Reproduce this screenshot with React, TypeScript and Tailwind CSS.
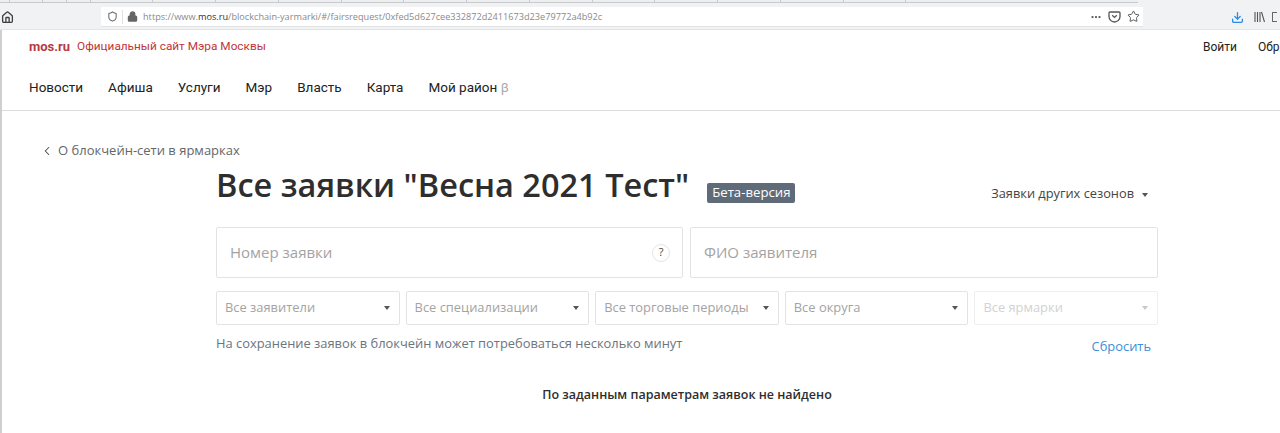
import React from 'react';
import { ChevronLeft, Download, Ellipsis, Home, Lock, Shield, Star } from 'lucide-react';

const navItems = ['Новости', 'Афиша', 'Услуги', 'Мэр', 'Власть', 'Карта'];

const filters = [
    { label: 'Все заявители' },
    { label: 'Все специализации' },
    { label: 'Все торговые периоды' },
    { label: 'Все округа' },
    { label: 'Все ярмарки', disabled: true },
];

function Caret({ light }: { light?: boolean }) {
    return <span className={`block w-0 h-0 border-x-[3.5px] border-x-transparent border-t-[4px] ${light ? 'border-t-[#c8c8c8]' : 'border-t-[#555]'}`}></span>;
}

function BrowserBar() {
    return (
        <div className="h-[30px] shrink-0 bg-[#f1f2f4] border-b border-[#e3e4e6] font-['Open_Sans',sans-serif]">
            <div className="h-[3px] w-[1138px] flex border-b border-[#c9cacc] bg-[#eceef0]">
                {[10, 33, 24, 24, 62, 63, 63, 63, 62, 63, 63, 63, 62, 63, 63, 63, 62].map((w, i) => (
                    <span key={i} className="border-r border-[#c9cacc]" style={{ width: w }}></span>
                ))}
            </div>
            <div className="flex items-center h-[26px] pt-[2px]">
                <Home size={13} strokeWidth={2.4} className="ml-[1px] text-[#3f3f3f]" />
                <div className="ml-[87px] w-[1042px] h-[20px] bg-white border-b border-[#e3e4e6] flex items-center">
                    <Shield size={11} strokeWidth={2.2} className="ml-[6px] text-[#666]" />
                    <span className="ml-[4px] h-[14px] border-l border-[#e0e0e0]"></span>
                    <Lock size={11} strokeWidth={2.6} fill="currentColor" className="ml-[4px] text-[#666]" />
                    <span className="ml-[5px] text-[9.17px] text-[#8a8a8a] whitespace-nowrap">
                        https://www.<span className="text-[#333]">mos.ru</span>/blockchain-yarmarki/#/fairsrequest/0xfed5d627cee332872d2411673d23e79772a4b92c
                    </span>
                    <div className="ml-auto flex items-center gap-[6px] pr-[3px] text-[#555]">
                        <Ellipsis size={12} strokeWidth={2.5} />
                        <svg width="13" height="13" viewBox="0 0 13 13" fill="none" stroke="#555" strokeWidth="1.3">
                            <path d="M2 2h9a1 1 0 0 1 1 1v3.5a5.5 5.5 0 0 1-11 0V3a1 1 0 0 1 1-1z" />
                            <path d="M4.2 5.2l2.3 2.2 2.3-2.2" />
                        </svg>
                        <Star size={13} strokeWidth={1.8} />
                    </div>
                </div>
                <Download size={13} strokeWidth={2.4} className="ml-[88px] text-[#2a8ae8]" />
                <svg className="ml-[10px]" width="11" height="12" viewBox="0 0 11 12" fill="none" stroke="#555" strokeWidth="1.1">
                    <path d="M1 1v10M3.5 1v10M6 1v10M7.5 1l3 10" />
                </svg>
                <span className="ml-[7px] w-[5px] h-[10px] border border-r-0 border-[#666] rounded-l-[1px]"></span>
            </div>
        </div>
    );
}

function SiteHeader() {
    return (
        <header className="font-['Roboto',sans-serif]">
            <div className="h-[34px] pl-[27px] flex items-center whitespace-nowrap">
                <span className="text-[13px] font-bold text-[#b73a3f]">mos.ru</span>
                <span className="ml-[7px] text-[11.8px] text-[#c0343a]">Официальный сайт Мэра Москвы</span>
                <span className="ml-auto text-[12px] text-[#222]">Войти</span>
                <span className="ml-[21px] w-[22px] text-[12px] text-[#222]">Обр</span>
            </div>
            <nav className="h-[47px] flex items-center pl-[27px] gap-[25px] border-b border-[#dcdcdc] text-[13.5px] text-[#222] whitespace-nowrap">
                {navItems.map((item) => (
                    <span key={item}>{item}</span>
                ))}
                <span>
                    Мой район <span className="text-[#aaa]">β</span>
                </span>
            </nav>
        </header>
    );
}

export default function App() {
    return (
        <div className="w-[1280px] h-[433px] overflow-hidden flex flex-col bg-white">
            <BrowserBar />
            <div className="flex-1 border-l-2 border-[#cfcfcf] font-['Open_Sans',sans-serif]">
                <SiteHeader />
                <a className="mt-[30px] ml-[38px] flex items-center h-[20px] text-[13px] text-[#666]">
                    <ChevronLeft size={14} strokeWidth={1.8} className="text-[#444]" />
                    <span className="ml-[4px]">О блокчейн-сети в ярмарках</span>
                </a>
                <div className="ml-[214px] w-[942px]">
                    <div className="flex items-center h-[46px] mt-[1px] whitespace-nowrap">
                        <h1 className="text-[32.5px] font-semibold text-[#2e2e2e] leading-none">Все заявки "Весна 2021 Тест"</h1>
                        <span className="ml-[18px] mt-[16px] h-[20px] px-[5px] bg-[#5f6b78] rounded-[2px] text-[13.2px] leading-[19px] text-white">Бета-версия</span>
                        <span className="ml-auto mt-[18px] text-[12.8px] text-[#444]">Заявки других сезонов</span>
                        <span className="ml-[8px] mr-[10px] mt-[20px]"><Caret /></span>
                    </div>
                    <div className="mt-[19px] grid grid-cols-[467px_468px] gap-[7px]">
                        <div className="h-[51px] border border-[#e3e3e3] rounded-[2px] flex items-center pl-[13px] pr-[12px] text-[15px] text-[#a3a3a3]">
                            Номер заявки
                            <span className="ml-auto w-[18px] h-[18px] rounded-full border border-[#e4e4e4] flex items-center justify-center text-[11px] text-[#444]">?</span>
                        </div>
                        <div className="h-[51px] border border-[#e3e3e3] rounded-[2px] flex items-center pl-[13px] text-[15px] text-[#a3a3a3]">
                            ФИО заявителя
                        </div>
                    </div>
                    <div className="mt-[13px] grid grid-cols-5 gap-[6px]">
                        {filters.map((filter) => (
                            <div
                                key={filter.label}
                                className={`h-[34px] rounded-[2px] border flex items-center justify-between pl-[8px] pr-[9px] text-[12.9px] whitespace-nowrap ${filter.disabled ? 'border-[#efefef] text-[#d2d2d2]' : 'border-[#e3e3e3] text-[#a3a3a3]'}`}
                            >
                                {filter.label}
                                <Caret light={filter.disabled} />
                            </div>
                        ))}
                    </div>
                    <div className="mt-[9px] flex h-[24px] text-[12.9px]">
                        <span className="text-[#6c747c]">На сохранение заявок в блокчейн может потребоваться несколько минут</span>
                        <span className="ml-auto mr-[7px] mt-[3px] text-[#3d8fd6]">Сбросить</span>
                    </div>
                    <p className="mt-[28px] text-center text-[12.5px] font-semibold text-[#2e2e2e]">По заданным параметрам заявок не найдено</p>
                </div>
            </div>
        </div>
    );
}
